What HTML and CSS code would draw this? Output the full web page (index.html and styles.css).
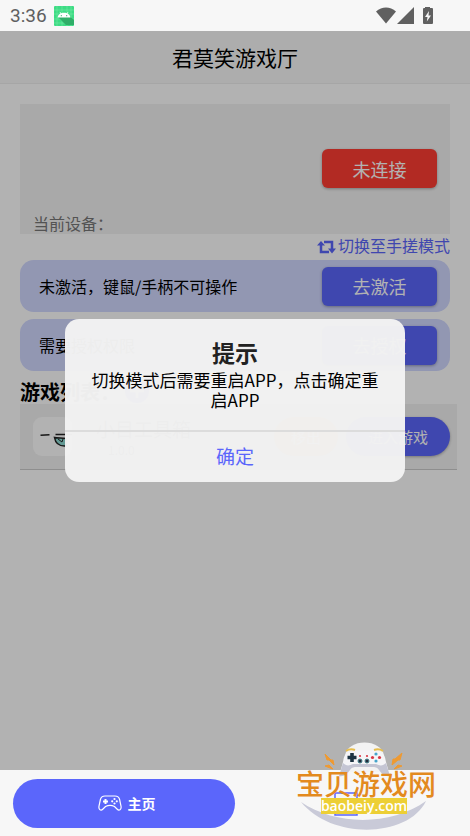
FILE: index.html
```html
<!DOCTYPE html>
<html lang="zh-CN">
<head>
  <meta charset="UTF-8">
  <meta name="viewport" content="width=device-width, initial-scale=1">
  <title>君莫笑游戏厅</title>
  <link rel="stylesheet" href="styles.css">
</head>
<body>
  <!-- Status bar -->
  <div class="status-bar">
    <span class="clock">3:36</span>
    <svg class="app-icon" width="20" height="20" viewBox="0 0 20 20">
      <rect width="20" height="20" rx="1" fill="#3ddc84"/>
      <path d="M3 0v20M8 0v20M13 0v20M17 0v20M0 4h20M0 8h20M0 13h20M0 17h20" stroke="#8aeab3" stroke-width=".4"/>
      <path d="M4 11l8 8h8v-5l-4-3.500z" fill="#2fae68"/>
      <path d="M3.500 11.500C4 9 5.500 8 6.500 7.500L5.500 6l.5-.3 1.200 1.500c2-.6 3.800-.6 5.600 0L14 5.700l.5.3-1 1.500c1.500.8 2.700 2 3 4z" fill="#fff"/>
      <circle cx="7.300" cy="9.700" r=".6" fill="#2fae68"/><circle cx="12.700" cy="9.700" r=".6" fill="#2fae68"/>
    </svg>
    <svg class="status-icons" width="58" height="18" viewBox="0 0 58 18" fill="#606060">
      <path d="M0 4.500C6-1 14-1 20 4.500L10 16.500z"/>
      <path d="M38 0v17H21z"/>
      <path d="M49 1V0h5v1h2q1 0 1 1v14q0 1-1 1h-8q-1 0-1-1V2q0-1 1-1z"/>
      <path d="M53 4l-4 6h2.500l-.7 4.500L55 8.500h-2.500z" fill="#f7f7f7"/>
    </svg>
  </div>

  <main class="screen">
    <header class="top-bar"><h1>君莫笑游戏厅</h1></header>

    <div class="content">
      <section class="device">
        <button class="btn btn-red">未连接</button>
        <p>当前设备：</p>
      </section>

      <a class="switch-mode" href="#">
        <svg width="19" height="14" viewBox="0 0 19 14" fill="none" stroke="#5b66fb" stroke-width="2.500">
          <path d="M4 4v8h8M7 2h8v8"/>
          <path d="M0 5.500L4 1l4 4.500zM11 8.500h8L15 13.500z" fill="#5b66fb" stroke="none"/>
        </svg>
        切换至手搓模式
      </a>

      <section class="card">
        <p>未激活，键鼠/手柄不可操作</p>
        <button class="btn">去激活</button>
      </section>
      <section class="card">
        <p>需要授权权限</p>
        <button class="btn">去授权</button>
      </section>

      <h2 class="list-title">游戏列表：
        <svg width="26" height="26" viewBox="0 0 26 26">
          <circle cx="13" cy="13" r="12" fill="#5b66fb"/>
          <path d="M13 6v14M6 13h14" stroke="#fff" stroke-width="3"/>
        </svg>
      </h2>

      <section class="game">
        <svg class="game-icon" width="39" height="39" viewBox="0 0 39 39">
          <rect width="39" height="39" rx="9" fill="#fff"/>
          <path d="M7.500 18.300l9-.6M22.500 17.500H39" stroke="#222" stroke-width="1.500"/>
          <path d="M21.500 20.500c1 6 5 9 11.500 8.500V21.500c-4-1-8 0-11.500-1z" fill="#8edbd5" stroke="#222" stroke-width="1.500"/>
          <path d="M25 22l4 3 1-3" stroke="#222" fill="none"/>
        </svg>
        <div class="game-info">
          <h3>小目工具箱</h3>
          <p>1.0.0</p>
        </div>
        <button class="pill pill-orange">移出</button>
        <button class="pill">进入游戏</button>
      </section>
    </div>

    <!-- Dialog -->
    <div class="mask">
      <div class="dialog" role="dialog" aria-labelledby="dialog-title">
        <h2 id="dialog-title">提示</h2>
        <p>切换模式后需要重启APP，点击确定重启APP</p>
        <button>确定</button>
      </div>
    </div>
  </main>

  <!-- Bottom tabs -->
  <nav class="tabs">
    <a class="tab active" href="#">
      <svg width="24" height="16" viewBox="0 0 24 16" fill="none" stroke="#fff" stroke-width="1.200">
        <path d="M7 1h10c3 0 4 1 4.600 3.500L23 11c.7 4-2 5-4 3l-2.500-2.500c-3-1.500-6-1.500-9 0L5 14c-2 2-4.700 1-4-3l1.400-6.500C3 2 4 1 7 1z"/>
        <path d="M7.500 4v5M5 6.500h5" stroke-width="2"/>
        <g fill="#fff" stroke="none"><circle cx="16.500" cy="4" r="1.100"/><circle cx="16.500" cy="8.500" r="1.100"/><circle cx="14.200" cy="6.300" r="1.100"/><circle cx="18.800" cy="6.300" r="1.100"/></g>
      </svg>
      主页
    </a>
    <a class="tab" href="#" aria-label="我的">
      <svg width="24" height="24" viewBox="0 0 24 24" fill="none" stroke="#5b66fb" stroke-width="1.500">
        <path d="M1 8V1h22v7M1 17v6h22v-6"/>
      </svg>
    </a>
  </nav>

  <!-- Site badge -->
  <div class="badge">
    <svg class="badge-art" width="140" height="92" viewBox="0 0 140 92">
      <path d="M5 60C40 84 95 84 130 59C113 95 37 99 5 60z" fill="#c9cad8"/>
      <path d="M49 14C51-4 86-4 88 14l-3 16H52z" fill="#f3f3f3"/>
      <path d="M54 10C63 8 74 8 83 10c5 1 6 4 7 10l4 14c-5 1-8-3-10-6-3-4-5-5-9-5H62c-4 0-6 1-9 5-2 3-5 7-10 6l4-14c1-6 2-9 7-10z" fill="#f5f5f7"/>
      <path d="M47 21c3 3 6 3 10 1h23c4 2 7 2 10-1l4 13c-5 1-8-2-11-6-2-3-4-3-7-3H61c-3 0-5 0-7 3-3 4-6 7-11 6z" fill="#c4c5d3"/>
      <path d="M50 9c3-2 6-2 9-1M78 8c3-1 6-1 9 1" stroke="#e6bd4c" stroke-width="2" fill="none"/>
      <path d="M56 11v9M51.500 15.500h9" stroke="#1c3341" stroke-width="3.600"/>
      <g fill="#d93643"><circle cx="76.500" cy="15.500" r="1.600"/><circle cx="83.500" cy="15.500" r="1.600"/><circle cx="64" cy="14" r="1.100"/><circle cx="71" cy="14" r="1.100"/></g>
      <g fill="#45a4cc"><circle cx="80" cy="12" r="1.600"/><circle cx="80" cy="19" r="1.600"/></g>
      <g fill="#222c3c" stroke="#45858e"><circle cx="64" cy="19" r="2"/><circle cx="71" cy="19" r="2"/></g>
      <path d="M29 12l6 6h2l1 5-5-5h-2zM29 24l4-1 4 4-3-1zM106 11l-7 6h-2l-1 6 6-5h2zM106 24l-4-1-4 4 3-1z" fill="#ee9a32" stroke="#ee9a32"/>
    </svg>
    <strong>宝贝游戏网</strong>
    <span>baobeiy.com</span>
  </div>
</body>
</html>
```

FILE: styles.css
```css
* {
  margin: 0;
  padding: 0;
  box-sizing: border-box;
}
body {
  display: flex;
  flex-direction: column;
  min-height: 100vh;
  position: relative;
  font-family: "Noto Sans CJK SC", sans-serif;
  font-size: 16px;
  color: #000;
  background: #f7f7f7;
}
button {
  border: none;
  font-family: inherit;
  cursor: pointer;
}
a {
  color: #5b66fb;
  text-decoration: none;
}

/* Status bar */
.status-bar {
  display: flex;
  align-items: center;
  gap: 7px;
  height: 31px;
  padding: 0 36px 0 10px;
}
.clock {
  font-family: Roboto, sans-serif;
  font-size: 19px;
  color: #606060;
}
.status-icons {
  margin-left: auto;
}

/* Page */
.screen {
  flex: 1;
  position: relative;
  background: #fff;
}
.top-bar {
  height: 53px;
  border-bottom: 1px solid #eee;
  background: #f8f8f8;
  text-align: center;
}
.top-bar h1 {
  font-size: 21px;
  font-weight: 400;
  line-height: 52px;
}
.content {
  padding: 20px;
}
.device {
  display: flex;
  flex-direction: column;
  height: 130px;
  padding: 45px 13px 0;
  background: #f3f3f3;
  color: #777;
}
.device p {
  margin-top: auto;
  line-height: 22px;
}
.btn {
  width: 115px;
  height: 39px;
  border-radius: 6px;
  background: #5b66fb;
  color: #fff;
  font-size: 18px;
  box-shadow: 0 1px 3px rgba(0, 0, 0, 0.3);
}
.btn-red {
  align-self: flex-end;
  background: #ff3d33;
}
.switch-mode {
  display: flex;
  align-items: center;
  justify-content: flex-end;
  gap: 2px;
  height: 26px;
  padding-bottom: 4px;
  line-height: 22px;
}
.switch-mode svg {
  margin-top: 4px;
}
.card {
  display: flex;
  align-items: center;
  justify-content: space-between;
  height: 52px;
  margin-bottom: 7px;
  padding: 0 13px 0 19px;
  border-radius: 14px;
  background: #d1d8ff;
}
.list-title {
  display: flex;
  align-items: center;
  gap: 4px;
  height: 26px;
  font-size: 20px;
}

/* Game row, runs a little past the right edge of the cards */
.game {
  display: flex;
  align-items: center;
  height: 66px;
  margin-right: -7px;
  padding: 0 7px 0 13px;
  border-bottom: 1px solid #ccc;
  background: #f3f3f3;
}
.game-info {
  flex: 1;
  padding-left: 24px;
}
.game-info h3 {
  font-size: 19px;
  font-weight: 400;
  line-height: 26px;
}
.game-info p {
  padding-left: 12px;
  font-size: 12px;
  line-height: 16px;
}
.pill {
  width: 104px;
  height: 39px;
  border-radius: 20px;
  background: #5b66fb;
  color: #fff;
  font-size: 15px;
  box-shadow: 0 1px 3px rgba(0, 0, 0, 0.3);
}
.pill-orange {
  width: 64px;
  margin-right: 8px;
  background: #ffb02e;
}

/* Dialog */
.mask {
  display: flex;
  align-items: center;
  justify-content: center;
  position: absolute;
  inset: 0;
  padding: 0 65px;
  background: rgba(0, 0, 0, 0.3);
}
.dialog {
  width: 100%;
  max-width: 400px;
  padding-top: 18px;
  border-radius: 14px;
  background: rgba(242, 242, 242, 0.98);
  text-align: center;
  overflow: hidden;
}
.dialog h2 {
  font-size: 23px;
  line-height: 30px;
  color: #222;
}
.dialog p {
  padding: 3px 20px 20px;
  font-size: 17px;
  line-height: 20px;
}
.dialog button {
  width: 100%;
  height: 52px;
  padding-bottom: 4px;
  border-top: 2px solid #dcdcdc;
  background: none;
  color: #5b66fb;
  font-size: 19px;
}

/* Bottom tabs */
.tabs {
  display: flex;
  height: 66px;
  padding: 9px 13px 8px;
}
.tab {
  flex: 1;
  display: flex;
  align-items: center;
  justify-content: center;
  gap: 6px;
  border-radius: 25px;
  font-size: 14px;
  font-weight: 700;
}
.tab.active {
  padding-bottom: 2px;
  background: #5b66fb;
  color: #fff;
}
.tab.active svg {
  margin-left: 5px;
}

/* Site badge over the bottom right corner */
.badge {
  display: flex;
  flex-direction: column;
  align-items: center;
  position: absolute;
  right: 34px;
  bottom: 2px;
  width: 140px;
  height: 92px;
  padding-top: 26px;
}
.badge-art {
  position: absolute;
  inset: 0;
}
.badge strong {
  position: relative;
  font-size: 28px;
  font-weight: 500;
  line-height: 30px;
  color: #e38a1e;
  white-space: nowrap;
}
.badge span {
  position: relative;
  margin-right: 4px;
  background: #edcf35;
  color: #fff;
  font-family: "Open Sans", sans-serif;
  font-size: 14px;
  font-weight: 600;
  line-height: 16px;
}
```
